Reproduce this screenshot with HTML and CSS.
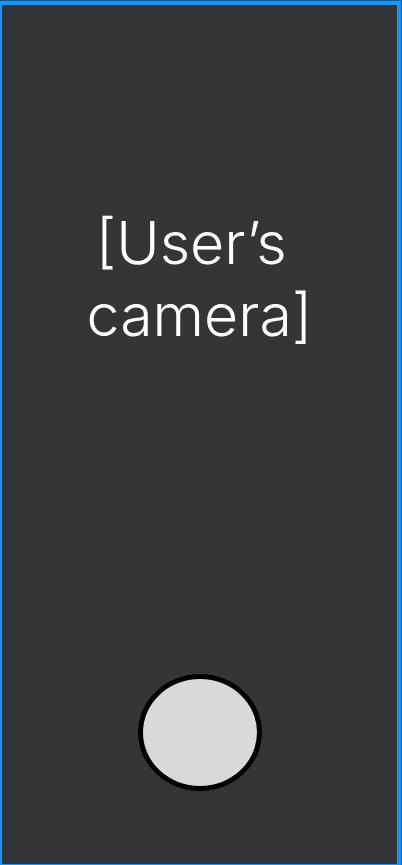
FILE: index.html
```html
<!DOCTYPE html>
<html lang="en">
<head>
<meta charset="utf-8">
<meta name="viewport" content="width=device-width, initial-scale=1">
<title>Camera</title>
<link rel="stylesheet" href="styles.css">
</head>
<body>
<main class="camera">
<p class="label">[User’s&nbsp;<br>camera]</p>
<button class="shutter" type="button" aria-label="Take photo"></button>
</main>
</body>
</html>
```

FILE: styles.css
```css
* { box-sizing: border-box; }
body {
  margin: 0;
  min-height: 100vh;
  display: flex;
  border: solid #175a91;
  border-width: 1px 1px 0 0;
}
.camera {
  flex: 1;
  display: flex;
  flex-direction: column;
  align-items: center;
  justify-content: space-between;
  padding: 202px 0 73px;
  background: #343537;
  border: solid #1495ff;
  border-width: 4px 4px 1px 2px;
}
.label {
  margin: 0;
  color: #fff;
  font: 300 59px/72px Inter, sans-serif;
  text-align: center;
}
.shutter {
  width: 124px;
  height: 117px;
  padding: 0;
  border: 5px solid #000;
  border-radius: 50%;
  background: #d9d9d9;
}
```
